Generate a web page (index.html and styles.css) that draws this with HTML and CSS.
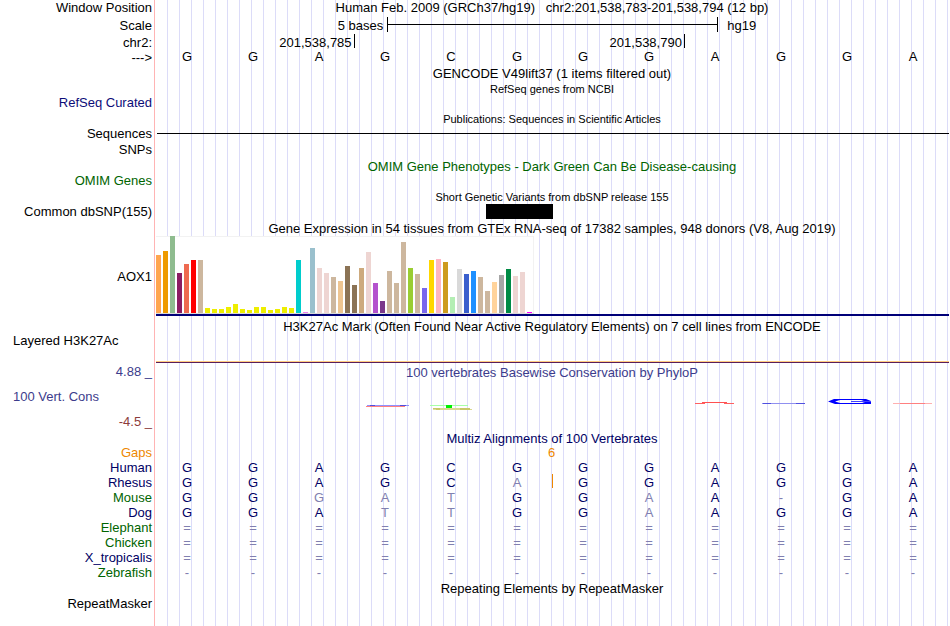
FILE: index.html
```html
<!DOCTYPE html>
<html lang="en">

<head>
    <meta charset="UTF-8">
    <meta name="viewport" content="width=device-width, initial-scale=1.0">
    <title>chr2:201,538,783-201,538,794 - Genome Browser</title>
    <link rel="stylesheet" href="styles.css">
</head>

<body>
    <main class="browser">
        <div class="row position">
            <div class="label">Window Position</div>
            <h1 class="title">Human Feb. 2009 (GRCh37/hg19) &nbsp; chr2:201,538,783-201,538,794 (12 bp)</h1>
        </div>
        <div class="row tall">
            <div class="label">Scale</div>
            <div class="scale">
                <span class="scale-name">5 bases</span>
                <span class="scale-bar"></span>
                <span class="scale-db">hg19</span>
            </div>
        </div>
        <div class="row tall">
            <div class="label">chr2:</div>
            <div class="ruler">
                <span class="tick first">201,538,785</span>
                <span class="tick">201,538,790</span>
            </div>
        </div>
        <div class="row bases-row">
            <div class="label">---&gt;</div>
            <div class="bases">
                <span>G</span><span>G</span><span>A</span><span>G</span><span>C</span><span>G</span>
                <span>G</span><span>G</span><span>A</span><span>G</span><span>G</span><span>A</span>
            </div>
        </div>

        <h2 class="title track-title">GENCODE V49lift37 (1 items filtered out)</h2>

        <h2 class="title track-title small">RefSeq genes from NCBI</h2>
        <div class="row compact">
            <div class="label blue">RefSeq Curated</div>
        </div>

        <h2 class="title track-title small">Publications: Sequences in Scientific Articles</h2>
        <div class="row">
            <div class="label">Sequences</div>
            <div class="sequence-line"></div>
        </div>
        <div class="row tall">
            <div class="label">SNPs</div>
        </div>

        <h2 class="title track-title green">OMIM Gene Phenotypes - Dark Green Can Be Disease-causing</h2>
        <div class="row compact">
            <div class="label green">OMIM Genes</div>
        </div>

        <h2 class="title track-title small">Short Genetic Variants from dbSNP release 155</h2>
        <div class="row">
            <div class="label">Common dbSNP(155)</div>
            <div class="snp"></div>
        </div>

        <h2 class="title track-title gtex-title">Gene Expression in 54 tissues from GTEx RNA-seq of 17382 samples, 948 donors (V8, Aug 2019)</h2>
        <div class="row gtex">
            <div class="label">AOX1</div>
            <div class="gene">
                <div class="chart">
                    <i style="height:58px;background:#ffa54f"></i>
                    <i style="height:62px;background:#ee9a00"></i>
                    <i style="height:77px;background:#8fbc8f"></i>
                    <i style="height:40px;background:#8b1c62"></i>
                    <i style="height:49px;background:#ee6a50"></i>
                    <i style="height:53px;background:#ff0000"></i>
                    <i style="height:53px;background:#cdb79e"></i>
                    <i style="height:5px;background:#eeee00"></i>
                    <i style="height:4px;background:#eeee00"></i>
                    <i style="height:4px;background:#eeee00"></i>
                    <i style="height:6px;background:#eeee00"></i>
                    <i style="height:9px;background:#eeee00"></i>
                    <i style="height:4px;background:#eeee00"></i>
                    <i style="height:3px;background:#eeee00"></i>
                    <i style="height:6px;background:#eeee00"></i>
                    <i style="height:6px;background:#eeee00"></i>
                    <i style="height:3px;background:#eeee00"></i>
                    <i style="height:4px;background:#eeee00"></i>
                    <i style="height:6px;background:#eeee00"></i>
                    <i style="height:5px;background:#eeee00"></i>
                    <i style="height:53px;background:#00cdcd"></i>
                    <i style="height:1px;background:#ee82ee"></i>
                    <i style="height:65px;background:#9ac0cd"></i>
                    <i style="height:45px;background:#eed5d2"></i>
                    <i style="height:40px;background:#eed5d2"></i>
                    <i style="height:36px;background:#cdb79e"></i>
                    <i style="height:32px;background:#eec591"></i>
                    <i style="height:47px;background:#8b7355"></i>
                    <i style="height:28px;background:#8b7355"></i>
                    <i style="height:45px;background:#cdaa7d"></i>
                    <i style="height:61px;background:#eed5d2"></i>
                    <i style="height:30px;background:#b452cd"></i>
                    <i style="height:12px;background:#7a378b"></i>
                    <i style="height:42px;background:#cdb79e"></i>
                    <i style="height:30px;background:#cdb79e"></i>
                    <i style="height:71px;background:#cdb79e"></i>
                    <i style="height:45px;background:#9acd32"></i>
                    <i style="height:39px;background:#cdb79e"></i>
                    <i style="height:25px;background:#7a67ee"></i>
                    <i style="height:53px;background:#ffd700"></i>
                    <i style="height:54px;background:#ffb6c1"></i>
                    <i style="height:51px;background:#cd9b1d"></i>
                    <i style="height:16px;background:#b4eeb4"></i>
                    <i style="height:44px;background:#d9d9d9"></i>
                    <i style="height:39px;background:#3a5fcd"></i>
                    <i style="height:42px;background:#1e90ff"></i>
                    <i style="height:36px;background:#cdb79e"></i>
                    <i style="height:22px;background:#cdb79e"></i>
                    <i style="height:31px;background:#ffd39b"></i>
                    <i style="height:38px;background:#a6a6a6"></i>
                    <i style="height:44px;background:#008b45"></i>
                    <i style="height:37px;background:#eed5d2"></i>
                    <i style="height:41px;background:#eed5d2"></i>
                    <i style="height:1px;background:#ff00ff"></i>
                </div>
            </div>
        </div>

        <h2 class="title track-title histone-title">H3K27Ac Mark (Often Found Near Active Regulatory Elements) on 7 cell lines from ENCODE</h2>
        <div class="row histone compact">
            <div class="label left">Layered H3K27Ac</div>
            <div class="signal"></div>
        </div>

        <div class="row cons">
            <div class="cons-labels">
                <div class="label phylo">4.88 _</div>
                <div class="label left phylo">100 Vert. Cons</div>
                <div class="label negative">-4.5 _</div>
            </div>
            <div class="cons-plot">
                <h2 class="title phylo">100 vertebrates Basewise Conservation by PhyloP</h2>
                <svg viewBox="154 390 796 30" aria-hidden="true">
                    <path d="M367 405.500H409" stroke="#9090ff" />
                    <path d="M370 405.500H375M400 405.500H406" stroke="#5050e0" />
                    <path d="M366 406.500H405" stroke="#ff8080" />
                    <path d="M430 405.500H468" stroke="#a8ffa8" />
                    <path d="M433 408.500H470M436 409.500H472" stroke="#d8d890" />
                    <path d="M433 409H440M460 409H470" stroke="#b8b840" />
                    <rect x="446" y="405" width="6" height="3" fill="#00f000" />
                    <path d="M695 403.500H705M724 403.500H734" stroke="#ff6060" />
                    <path d="M702 402.500H727" stroke="#ff5050" />
                    <path d="M762 403.500H805" stroke="#9090f0" />
                    <path d="M763 403.500H771M796 403.500H805" stroke="#5050e0" />
                    <path d="M828 401.500L834 399H866L871 401H864L861 400H840L835 401.500L840 403H862L865 402H871V404H835Z" fill="#0000ff" />
                    <path d="M851 401.500H871" stroke="#4040ff" />
                    <path d="M893 403.500H932" stroke="#ffb0b0" />
                    <path d="M900 403.500H925" stroke="#ff8080" />
                </svg>
            </div>
        </div>

        <h2 class="title track-title multiz">Multiz Alignments of 100 Vertebrates</h2>
        <table class="alignment">
            <tr class="gaps"><th>Gaps</th><td colspan="12">6</td></tr>
            <tr><th>Human</th><td>G</td><td>G</td><td>A</td><td>G</td><td>C</td><td>G</td><td>G</td><td>G</td><td>A</td><td>G</td><td>G</td><td>A</td></tr>
            <tr><th>Rhesus</th><td>G</td><td>G</td><td>A</td><td>G</td><td>C</td><td class="diff insert">A</td><td>G</td><td>G</td><td>A</td><td>G</td><td>G</td><td>A</td></tr>
            <tr><th class="green">Mouse</th><td>G</td><td>G</td><td class="diff">G</td><td class="diff">A</td><td class="diff">T</td><td>G</td><td>G</td><td class="diff">A</td><td>A</td><td class="diff">-</td><td>G</td><td>A</td></tr>
            <tr><th>Dog</th><td>G</td><td>G</td><td>A</td><td class="diff">T</td><td class="diff">T</td><td>G</td><td>G</td><td class="diff">A</td><td>A</td><td>G</td><td>G</td><td>A</td></tr>
            <tr class="missing"><th class="green">Elephant</th><td>=</td><td>=</td><td>=</td><td>=</td><td>=</td><td>=</td><td>=</td><td>=</td><td>=</td><td>=</td><td>=</td><td>=</td></tr>
            <tr class="missing"><th class="green">Chicken</th><td>=</td><td>=</td><td>=</td><td>=</td><td>=</td><td>=</td><td>=</td><td>=</td><td>=</td><td>=</td><td>=</td><td>=</td></tr>
            <tr class="missing"><th>X_tropicalis</th><td>=</td><td>=</td><td>=</td><td>=</td><td>=</td><td>=</td><td>=</td><td>=</td><td>=</td><td>=</td><td>=</td><td>=</td></tr>
            <tr class="missing"><th class="green">Zebrafish</th><td>-</td><td>-</td><td>-</td><td>-</td><td>-</td><td>-</td><td>-</td><td>-</td><td>-</td><td>-</td><td>-</td><td>-</td></tr>
        </table>

        <h2 class="title track-title">Repeating Elements by RepeatMasker</h2>
        <div class="row">
            <div class="label">RepeatMasker</div>
        </div>
    </main>
</body>

</html>
```
FILE: styles.css
```css
* {
    box-sizing: border-box;
    margin: 0;
    padding: 0;
}

body {
    font-family: "Liberation Sans", Arial, Helvetica, sans-serif;
    font-size: 13px;
    line-height: 15px;
    color: #000;
    background-color: #fff;
}

/* pink edge of the label column, then a guide line every 12px */
.browser {
    min-height: 100vh;
    background-image:
        linear-gradient(#ffb4b4, #ffb4b4),
        repeating-linear-gradient(to right, #dcdcf8 0, #dcdcf8 1px, transparent 1px, transparent 12px);
    background-size: 1px 100%, 100% 100%;
    background-position: 154px 0, 167px 0;
    background-repeat: no-repeat;
}

.row {
    display: grid;
    grid-template-columns: 154px 1fr;
    min-height: 15px;
}

.tall {
    line-height: 17px;
}

.compact {
    line-height: 13px;
}

.label {
    padding-right: 2px;
    text-align: right;
    white-space: nowrap;
}

.label.left {
    padding-left: 13px;
    text-align: left;
}

.title {
    font-size: 13px;
    font-weight: normal;
    text-align: center;
    white-space: nowrap;
}

.track-title {
    height: 16px;
    margin-left: 154px;
    line-height: 18px;
}

.track-title.small {
    height: 15px;
    font-size: 11px;
    line-height: 17px;
}

.track-title.gtex-title {
    height: 17px;
    padding-top: 1px;
}

.blue {
    color: #0c0c78;
}

.green {
    color: #006400;
}

.phylo {
    color: #3c3c8c;
}

.negative {
    color: #8c3c3c;
}

/* Position and scale */
.position {
    min-height: 17px;
}

.scale {
    display: grid;
    grid-template-columns: 29.3% 41.6% 1fr;
}

.scale-name {
    padding-right: 4px;
    text-align: right;
}

.scale-bar {
    height: 15px;
    border: solid #000;
    border-width: 0 1px;
    background: linear-gradient(#000, #000) 0 7px / 100% 1px no-repeat;
}

.scale-db {
    padding-left: 9px;
}

.ruler {
    display: flex;
}

.tick {
    width: 41.5%;
    height: 14px;
    padding-right: 2px;
    border-right: 1px solid #000;
    text-align: right;
}

.tick.first {
    width: 25.2%;
}

.bases-row {
    min-height: 14px;
    line-height: 14px;
}

.bases {
    display: grid;
    grid-template-columns: repeat(12, 1fr);
    margin-right: 4px;
    line-height: 12px;
    text-align: center;
}

/* Items */
.sequence-line {
    height: 1px;
    margin: 7px 1px 0 3px;
    background-color: #000;
}

.snp {
    width: 8.4%;
    margin-left: 41.7%;
    background-color: #000;
}

.gtex {
    align-items: center;
}

.gene {
    padding-left: 2px;
    margin-right: 1px;
    background: linear-gradient(#000078, #000078) 2px 100% / 100% 2px no-repeat;
}

.chart {
    display: flex;
    align-items: flex-end;
    gap: 2px;
    width: 378px;
    height: 78px;
    margin-bottom: 2px;
    border-bottom: 1px solid #d9d9d9;
    background-color: #fff;
    box-shadow: inset 0 1px #f2f2f2, inset -1px 0 #f2f2f2;
}

.chart i {
    width: 5px;
}

.track-title.histone-title {
    height: 18px;
    padding-top: 2px;
}

.histone {
    height: 29px;
}

.signal {
    margin: 0 1px 0 2px;
    border-bottom: 1px solid #5a1e5a;
    box-shadow: inset 0 -1px #ffcc80;
}

/* Conservation */
.cons {
    height: 68px;
}

.cons-labels {
    display: flex;
    flex-direction: column;
    gap: 10px;
    padding-top: 1px;
}

.cons-plot {
    padding-top: 2px;
}

.cons-plot svg {
    display: block;
    width: 100%;
    margin-top: 10px;
    fill: none;
    stroke-width: 1;
}

.track-title.multiz {
    height: 14px;
    color: #000064;
    line-height: 15px;
}

.alignment {
    width: calc(100% - 4px);
    table-layout: fixed;
    border-collapse: collapse;
    color: #000064;
}

.alignment th {
    width: 154px;
    padding-right: 2px;
    font-weight: normal;
    text-align: right;
}

.alignment td {
    text-align: center;
}

.alignment .gaps {
    color: #ee8800;
}

.alignment .gaps td {
    padding-left: 3px;
}

.alignment .diff,
.alignment .missing td {
    color: #8080b0;
}

.insert {
    position: relative;
}

.insert::after {
    content: "";
    position: absolute;
    top: -1px;
    right: -3px;
    width: 1px;
    height: 14px;
    background-color: #ee8800;
}
```
